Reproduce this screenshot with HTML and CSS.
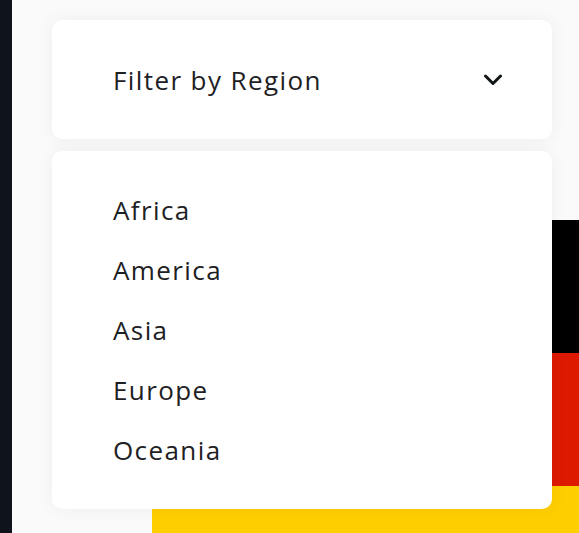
FILE: index.html
```html
<!DOCTYPE html>
<html>
<head>
<meta charset="utf-8">
<link rel="stylesheet" href="styles.css">
</head>
<body>
<div class="page">
  <aside class="edge"></aside>
  <main class="main">
    <div class="filter">
      <div class="filter-box">
        <span class="filter-label">Filter by Region</span>
        <svg class="chevron" width="20" height="12" viewBox="0 0 20 12"><path d="M2.5 2 L10 9.5 L17.5 2" fill="none" stroke="#111517" stroke-width="3" stroke-linecap="round" stroke-linejoin="round"/></svg>
      </div>
      <ul class="menu">
        <li>Africa</li>
        <li>America</li>
        <li>Asia</li>
        <li>Europe</li>
        <li>Oceania</li>
      </ul>
    </div>
    <div class="grid">
      <div class="flag">
        <div class="stripe black"></div>
        <div class="stripe red"></div>
        <div class="stripe gold"></div>
      </div>
    </div>
  </main>
</div>
</body>
</html>
```
FILE: styles.css
```css
* { box-sizing: border-box; }
html, body { margin: 0; padding: 0; }
body {
  background: #fafafa;
  font-family: "Open Sans", "Noto Sans", sans-serif;
  color: #1e2124;
  overflow: hidden;
  width: 579px;
  height: 533px;
}
.page {
  display: flex;
  height: 533px;
  overflow: hidden;
}
.edge {
  width: 12px;
  flex: none;
  background: #0f131c;
}
.main {
  flex: 1;
  padding: 20px 0 0 40px;
  overflow: hidden;
}
.filter {
  position: relative;
  width: 500px;
}
.filter-box {
  height: 119px;
  background: #fff;
  border-radius: 10px;
  box-shadow: 0 0 18px rgba(0, 0, 0, 0.05);
  display: flex;
  align-items: center;
  justify-content: space-between;
  padding: 0 49px 0 61px;
}
.filter-label {
  font-size: 26px;
  letter-spacing: 1.4px;
}
.chevron { display: block; }
.menu {
  position: absolute;
  z-index: 2;
  top: 131px;
  left: 0;
  width: 500px;
  margin: 0;
  padding: 29px 0;
  list-style: none;
  background: #fff;
  border-radius: 10px;
  box-shadow: 0 0 18px rgba(0, 0, 0, 0.05);
}
.menu li {
  height: 60px;
  line-height: 60px;
  padding-left: 61px;
  font-size: 26px;
  letter-spacing: 1.4px;
}
.grid {
  display: flex;
  padding: 81px 0 0 100px;
}
.flag {
  width: 440px;
  flex: none;
  display: flex;
  flex-direction: column;
}
.stripe { height: 133px; flex: none; }
.black { background: #000; }
.red { background: #dd1a00; }
.gold { background: #ffce00; }
```
